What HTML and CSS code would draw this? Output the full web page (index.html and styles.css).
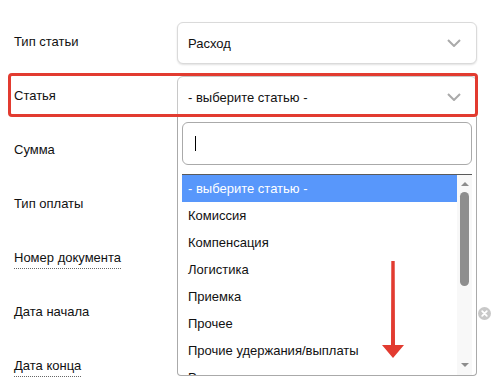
FILE: index.html
```html
<!DOCTYPE html>
<html lang="ru">
<head>
<meta charset="utf-8">
<title>Форма</title>
<link rel="stylesheet" href="styles.css">
</head>
<body>
<form class="form">
  <div class="row">
    <div class="label">Тип статьи</div>
    <div class="select">
      <span class="sel-text">Расход</span>
      <svg class="chev" width="14" height="8" viewBox="0 0 14 8"><polyline points="1,1 7,7 13,1" fill="none" stroke="#aaa" stroke-width="2"/></svg>
    </div>
    <div></div>
  </div>
  <div class="row">
    <div class="label">Статья</div>
    <div class="select open">
      <span class="sel-text">- выберите статью -</span>
      <svg class="chev" width="14" height="8" viewBox="0 0 14 8"><polyline points="1,1 7,7 13,1" fill="none" stroke="#aaa" stroke-width="2"/></svg>
      <div class="dropdown">
        <div class="search"><span class="caret"></span></div>
        <div class="results">
          <ul class="options">
            <li class="opt active">- выберите статью -</li>
            <li class="opt">Комиссия</li>
            <li class="opt">Компенсация</li>
            <li class="opt">Логистика</li>
            <li class="opt">Приемка</li>
            <li class="opt">Прочее</li>
            <li class="opt">Прочие удержания/выплаты</li>
            <li class="opt">Разное</li>
          </ul>
          <div class="scrollbar">
            <span class="arrow-up"></span>
            <span class="thumb"></span>
            <span class="spacer"></span>
            <span class="arrow-down"></span>
          </div>
        </div>
      </div>
    </div>
    <div></div>
  </div>
  <div class="row">
    <div class="label">Сумма</div>
    <div class="field"></div>
    <div></div>
  </div>
  <div class="row">
    <div class="label">Тип оплаты</div>
    <div class="field"></div>
    <div></div>
  </div>
  <div class="row">
    <div class="label"><span class="dotted">Номер документа</span></div>
    <div class="field"></div>
    <div></div>
  </div>
  <div class="row">
    <div class="label">Дата начала</div>
    <div class="field"></div>
    <div class="clear">
      <svg width="13" height="13" viewBox="0 0 13 13"><circle cx="6.5" cy="6.5" r="6.5" fill="#c8c8c8"/><path d="M4.2 4.2 L8.8 8.8 M8.8 4.2 L4.2 8.8" stroke="#fff" stroke-width="1.8" stroke-linecap="round"/></svg>
    </div>
  </div>
  <div class="row">
    <div class="label"><span class="dotted">Дата конца</span></div>
    <div class="field"></div>
    <div></div>
  </div>
</form>
<div class="highlight"></div>
<svg class="red-arrow" width="26" height="102" viewBox="0 0 26 102">
  <path d="M11.3 2 L14.7 2 L15 86 L24 86 L13 99 L2 86 L11 86 Z" fill="#e23b30"/>
</svg>
</body>
</html>
```

FILE: styles.css
```css
html, body {
  margin: 0;
  padding: 0;
  background: #fff;
}

body {
  font-family: "Liberation Sans", Arial, sans-serif;
  font-size: 13px;
  color: #111;
  width: 492px;
  height: 383px;
  overflow: hidden;
  position: relative;
}

.form {
  display: flex;
  flex-direction: column;
  gap: 12px;
  padding: 22px 0 0 14px;
}

.row {
  display: grid;
  grid-template-columns: 163px 300px 15px;
  height: 42px;
  align-items: center;
}

.label {
  line-height: 15px;
  margin-bottom: 3px;
}

.dotted {
  border-bottom: 1px dotted #666;
  padding-bottom: 3px;
}

.select {
  position: relative;
  box-sizing: border-box;
  height: 42px;
  border: 1px solid #dadada;
  border-radius: 6px;
  box-shadow: 0 1px 2px rgba(0, 0, 0, 0.12);
  display: flex;
  align-items: center;
  justify-content: space-between;
  padding: 0 15px 0 10px;
  background: #fff;
}

.select.open {
  border-color: #c8c8c8;
  border-bottom-left-radius: 0;
  border-bottom-right-radius: 0;
  box-shadow: none;
  z-index: 2;
}

.sel-text {
  line-height: 15px;
  color: #111;
}

.chev {
  display: block;
}

.field {
  height: 42px;
}

.clear {
  display: flex;
  justify-content: center;
  align-items: center;
}

.clear svg {
  display: block;
}

.dropdown {
  position: absolute;
  top: 100%;
  left: -1px;
  width: 300px;
  box-sizing: border-box;
  background: #fff;
  border: 1px solid #aaa;
  border-top: none;
  border-radius: 0 0 4px 4px;
  padding: 5px 4px 0 4px;
}

.search {
  box-sizing: border-box;
  height: 43px;
  border: 1px solid #aaa;
  border-radius: 6px;
  margin-bottom: 9px;
  display: flex;
  align-items: center;
  padding-left: 12px;
}

.caret {
  display: block;
  width: 1px;
  height: 15px;
  background: #000;
}

.results {
  display: flex;
  height: 200px;
  border-top: 1px solid #5a5a5a;
  overflow: hidden;
}

.options {
  list-style: none;
  margin: 0;
  padding: 0;
  flex: 1;
}

.opt {
  height: 27px;
  box-sizing: border-box;
  padding: 6px 6px;
  line-height: 15px;
  color: #111;
  white-space: nowrap;
}

.opt.active {
  background: #5897fb;
  color: #fff;
}

.scrollbar {
  width: 15px;
  background: #f8f8f8;
  display: flex;
  flex-direction: column;
  align-items: center;
  padding: 7px 0 8px;
  box-sizing: border-box;
}

.arrow-up {
  width: 0;
  height: 0;
  border-left: 4px solid transparent;
  border-right: 4px solid transparent;
  border-bottom: 4px solid #8c8c8c;
}

.arrow-down {
  width: 0;
  height: 0;
  border-left: 4px solid transparent;
  border-right: 4px solid transparent;
  border-top: 4px solid #8c8c8c;
}

.thumb {
  width: 9px;
  height: 94px;
  margin-top: 6px;
  border-radius: 5px;
  background: #8e8e8e;
}

.spacer {
  flex: 1;
}

.highlight {
  position: absolute;
  left: 8px;
  top: 73px;
  width: 470px;
  height: 44px;
  box-sizing: border-box;
  border: 3px solid #e23b30;
  border-radius: 4px;
  z-index: 3;
  pointer-events: none;
}

.red-arrow {
  position: absolute;
  left: 380px;
  top: 259px;
  z-index: 4;
}
```
